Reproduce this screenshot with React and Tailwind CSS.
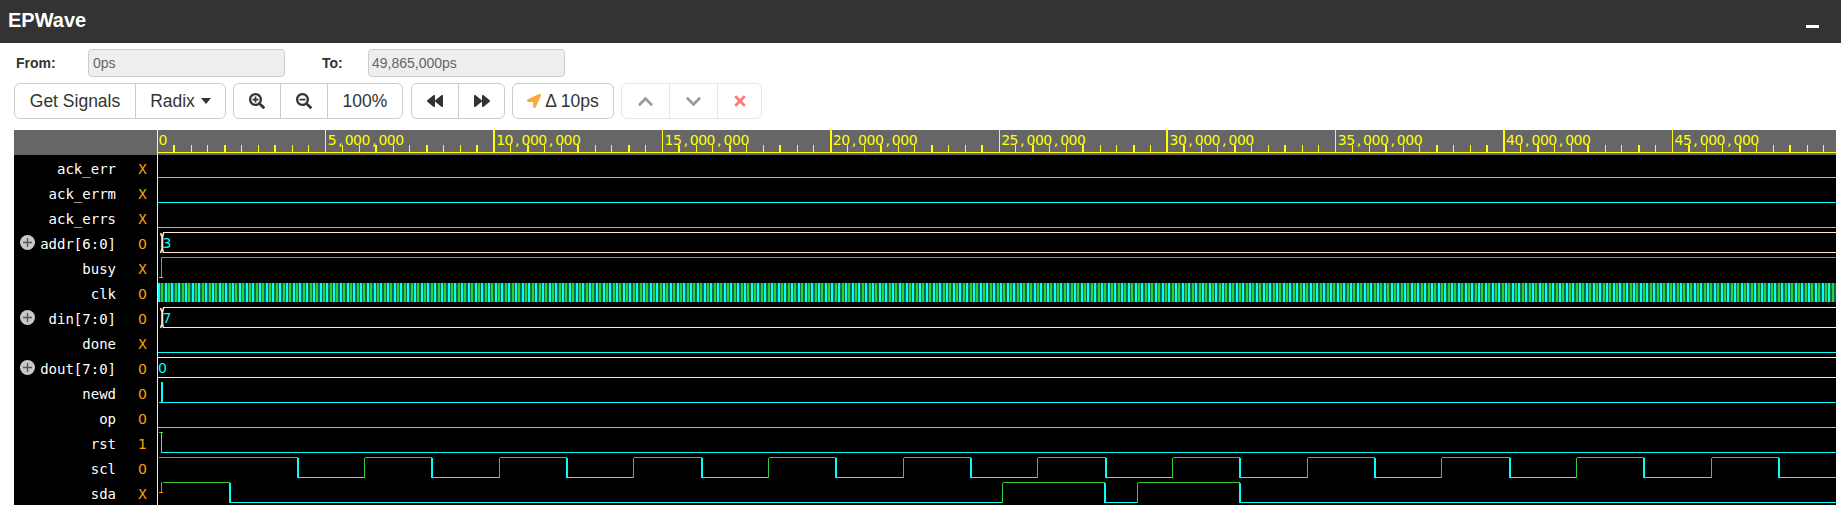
import React from 'react';
import { FaSearchPlus, FaSearchMinus, FaBackward, FaForward, FaLocationArrow, FaChevronUp, FaChevronDown, FaTimes } from 'react-icons/fa';

const CYAN = '#00ffff';
const GREEN = '#32cd32';
const CREAM = '#ffe8cc';
const MONO = '"DejaVu Sans Mono", monospace';
const RIGHT = 1836;

const signals = [
  { name: 'ack_err', value: 'X' },
  { name: 'ack_errm', value: 'X' },
  { name: 'ack_errs', value: 'X' },
  { name: 'addr[6:0]', value: '0', bus: true },
  { name: 'busy', value: 'X' },
  { name: 'clk', value: '0' },
  { name: 'din[7:0]', value: '0', bus: true },
  { name: 'done', value: 'X' },
  { name: 'dout[7:0]', value: '0', bus: true },
  { name: 'newd', value: '0' },
  { name: 'op', value: '0' },
  { name: 'rst', value: '1' },
  { name: 'scl', value: '0' },
  { name: 'sda', value: 'X' },
];

function Seg({ x1, y1, x2, y2, color, width = 1 }) {
  return <line x1={x1} y1={y1} x2={x2} y2={y2} stroke={color} strokeWidth={width} shapeRendering="crispEdges" />;
}

function Low({ y, from = 158, to = RIGHT }) {
  return <Seg x1={from} y1={y} x2={to} y2={y} color={CYAN} />;
}

// one digital level run: edges = [[x, level], ...]
function Digital({ top, edges }) {
  const hi = top + 0.5;
  const lo = top + 20.5;
  return (
    <g>
      {edges.map(([x, level], i) => {
        const next = i + 1 < edges.length ? edges[i + 1][0] : RIGHT;
        return (
          <g key={i}>
            <Seg x1={x} y1={level ? hi : lo} x2={next} y2={level ? hi : lo} color={level ? GREEN : CYAN} />
            {i + 1 < edges.length && (
              level ? (
                <Seg x1={next} y1={hi} x2={next} y2={lo + 0.5} color={CYAN} width={2} />
              ) : (
                <Seg x1={next} y1={hi} x2={next} y2={lo} color={GREEN} />
              )
            )}
          </g>
        );
      })}
    </g>
  );
}

function Bus({ top, start, text }) {
  const t = top + 0.5;
  const b = top + 20.5;
  return (
    <g>
      <Seg x1={start} y1={t} x2={RIGHT} y2={t} color={CREAM} />
      <Seg x1={start} y1={b} x2={RIGHT} y2={b} color={CREAM} />
      {start > 160 && (
        <path
          d={`M160.5 ${top + 1} L162 ${top + 5} V${top + 17} L160.5 ${top + 21} M163.5 ${top + 1} L162.5 ${top + 5} V${top + 17} L163.5 ${top + 21}`}
          stroke={CREAM}
          strokeWidth="1.6"
          fill="none"
        />
      )}
      <text x={start > 160 ? 162.5 : 158} y={top + 16} fill={CYAN} fontFamily='"DejaVu Sans", sans-serif' fontSize="14">{text}</text>
    </g>
  );
}

function Ruler() {
  const step = 168.33;
  const ticks = [];
  for (let i = 0; i <= 100; i++) {
    const x = 157.5 + (i * step) / 10;
    if (x > RIGHT) break;
    if (i % 10 === 0) {
      if (i === 0) continue;
      ticks.push(<Seg key={i} x1={x} y1={130} x2={x} y2={152} color="#ffff00" width={i % 20 === 0 ? 2 : 1} />);
    } else {
      ticks.push(<Seg key={i} x1={x} y1={145} x2={x} y2={152} color="#ffff00" width={i % 3 === 1 ? 2 : 1} />);
    }
  }
  const labels = [];
  for (let i = 0; i < 10; i++) {
    const x = 158.5 + i * step + (i ? 1 : 0);
    const str = (i * 5000000).toLocaleString('en-US');
    // the font is not monospaced, so every glyph gets its own cell
    const xs = str.split('').map((c, k) => (x + k * 8.43 + (c === ',' ? 2 : 0)).toFixed(1)).join(' ');
    labels.push(
      <text key={i} x={xs} y={145} fill="#ffff00" fontFamily='"DejaVu Sans", sans-serif' fontSize="14">{str}</text>
    );
  }
  return (
    <g>
      <rect x="158" y="130" width="1678" height="25" fill="#666666" />
      {labels}
      {ticks}
      <Seg x1={158} y1={152} x2={RIGHT} y2={152} color="#ffff00" />
    </g>
  );
}

function Clock() {
  const lines = [];
  const half = 3.3675;
  let n = 0;
  for (let x = 159; x < RIGHT; x += half) {
    lines.push(
      <Seg key={n} x1={Math.round(x)} y1={283} x2={Math.round(x)} y2={302} color={n % 2 ? GREEN : CYAN} width={2} />
    );
    n++;
  }
  return (
    <g>
      <rect x="158" y="283" width="1678" height="19" fill="#0a6a4c" />
      {lines}
    </g>
  );
}

function sclEdges() {
  const edges = [[159, 1]];
  let level = 0;
  for (let x = 296.5; x < RIGHT; x += 67.35) {
    edges.push([Math.round(x) + 0.5, level]);
    level = level ? 0 : 1;
  }
  return edges;
}

function Waves() {
  return (
    <svg className="block" width="1678" height="375" viewBox="158 130 1678 375">
      <Ruler />
      <Low y={177.5} />
      <Low y={202.5} />
      <Low y={227.5} />
      <Bus top={232} start={163} text="3" />

      {/* busy */}
      <Seg x1={161.5} y1={257} x2={161.5} y2={277} color={GREEN} />
      <Seg x1={161} y1={257.5} x2={RIGHT} y2={257.5} color={GREEN} />
      <Seg x1={159} y1={277.5} x2={163} y2={277.5} color={CYAN} />

      <Clock />
      <Bus top={307} start={163} text="7" />
      <Low y={352.5} />
      <Bus top={357} start={158} text="0" />

      {/* newd */}
      <Seg x1={162} y1={382} x2={162} y2={402} color={CYAN} width={2} />
      <Low y={402.5} from={159} />
      <Low y={427.5} />

      {/* rst */}
      <Seg x1={159} y1={432.5} x2={163} y2={432.5} color={GREEN} />
      <Seg x1={161.5} y1={432} x2={161.5} y2={452} color={CYAN} />
      <Low y={452.5} from={161} />

      <Digital top={457} edges={sclEdges()} />

      {/* sda */}
      <Seg x1={159} y1={492.5} x2={163} y2={492.5} color="#e08a20" />
      <Seg x1={161.5} y1={482} x2={161.5} y2={492} color={GREEN} />
      <Digital top={482} edges={[[163, 1], [229.5, 0], [1002.5, 1], [1104.5, 0], [1137.5, 1], [1239.5, 0]]} />
    </svg>
  );
}

function SignalRow({ name, value, bus }) {
  return (
    <div className="h-[25px] flex items-center relative">
      {bus && (
        <span className="absolute left-[6px] top-[5px] w-[15px] h-[15px] rounded-full bg-[#c8c8c8] flex items-center justify-center">
          <svg width="9" height="9" viewBox="0 0 9 9"><path d="M4.5 0v9M0 4.5h9" stroke="#555" strokeWidth="1.4" /></svg>
        </span>
      )}
      <span className="w-[102px] text-right text-white text-[14px] leading-[25px] pt-[3px] whitespace-pre">{name}</span>
      <span className={`w-[25px] ml-[14px] text-center text-[#ffa500] text-[14px] leading-[25px] pt-[3px] ${value === 'X' ? '' : "font-['DejaVu_Sans']"}`}>{value}</span>
    </div>
  );
}

function Group({ children, className = '' }) {
  return <div className={`flex h-[36px] border border-[#ccc] rounded-[6px] bg-white ${className}`}>{children}</div>;
}

function Btn({ children, className = '' }) {
  return <button className={`h-full flex items-center justify-center border-r border-[#ccc] last:border-r-0 text-[#333] ${className}`}>{children}</button>;
}

export default function App() {
  return (
    <div className="w-[1841px] h-[509px] bg-white overflow-hidden font-['Liberation_Sans',Arial,sans-serif]">
      <div className="h-[43px] bg-[#333333] flex items-center justify-between pl-[8px] pr-[22px]">
        <h1 className="text-white text-[20px] font-bold leading-none -mt-[3px]">EPWave</h1>
        <div className="w-[13px] h-[3px] bg-white mt-[9px]" />
      </div>

      <div className="h-[28px] mt-[6px] flex items-center text-[14px]">
        <label className="w-[72px] ml-[16px] font-bold text-[#333]">From:</label>
        <input readOnly value="0ps" className="w-[197px] h-[28px] px-[4px] bg-[#eeeeee] border border-[#ccc] rounded-[4px] text-[#666]" />
        <label className="w-[46px] ml-[37px] font-bold text-[#333]">To:</label>
        <input readOnly value="49,865,000ps" className="w-[197px] h-[28px] px-[3px] bg-[#eeeeee] border border-[#ccc] rounded-[4px] text-[#666]" />
      </div>

      <div className="h-[36px] mt-[6px] ml-[14px] flex gap-[7px] text-[17.5px]">
        <Group>
          <Btn className="w-[121px]">Get Signals</Btn>
          <Btn className="w-[89px] gap-[6px]">
            Radix
            <span className="w-0 h-0 border-x-[5.5px] border-x-transparent border-t-[6px] border-t-[#333]" />
          </Btn>
        </Group>
        <Group>
          <Btn className="w-[47px]"><FaSearchPlus size={16} /></Btn>
          <Btn className="w-[47px]"><FaSearchMinus size={16} /></Btn>
          <Btn className="w-[74px]">100%</Btn>
        </Group>
        <Group className="ml-px">
          <Btn className="w-[47px]"><FaBackward size={16} /></Btn>
          <Btn className="w-[45px]"><FaForward size={16} /></Btn>
        </Group>
        <Group>
          <Btn className="w-[100px] gap-[4px]">
            <FaLocationArrow size={14} className="text-[#f7a836]" />
            Δ 10ps
          </Btn>
        </Group>
        <Group className="border-[#e6e6e6]">
          <Btn className="w-[48px] border-[#e6e6e6]"><FaChevronUp size={17} className="text-[#999]" /></Btn>
          <Btn className="w-[48px] border-[#e6e6e6]"><FaChevronDown size={17} className="text-[#999]" /></Btn>
          <Btn className="w-[43px]"><FaTimes size={16} className="text-[#ff7b7b]" /></Btn>
        </Group>
      </div>

      <div className="mt-[11px] ml-[14px] w-[1822px] flex bg-black" style={{ fontFamily: MONO }}>
        <div className="w-[144px] border-r border-[#ffe8cc]">
          <div className="h-[25px] bg-[#666666]" />
          {signals.map((s) => (
            <SignalRow key={s.name} {...s} />
          ))}
        </div>
        <Waves />
      </div>
    </div>
  );
}
